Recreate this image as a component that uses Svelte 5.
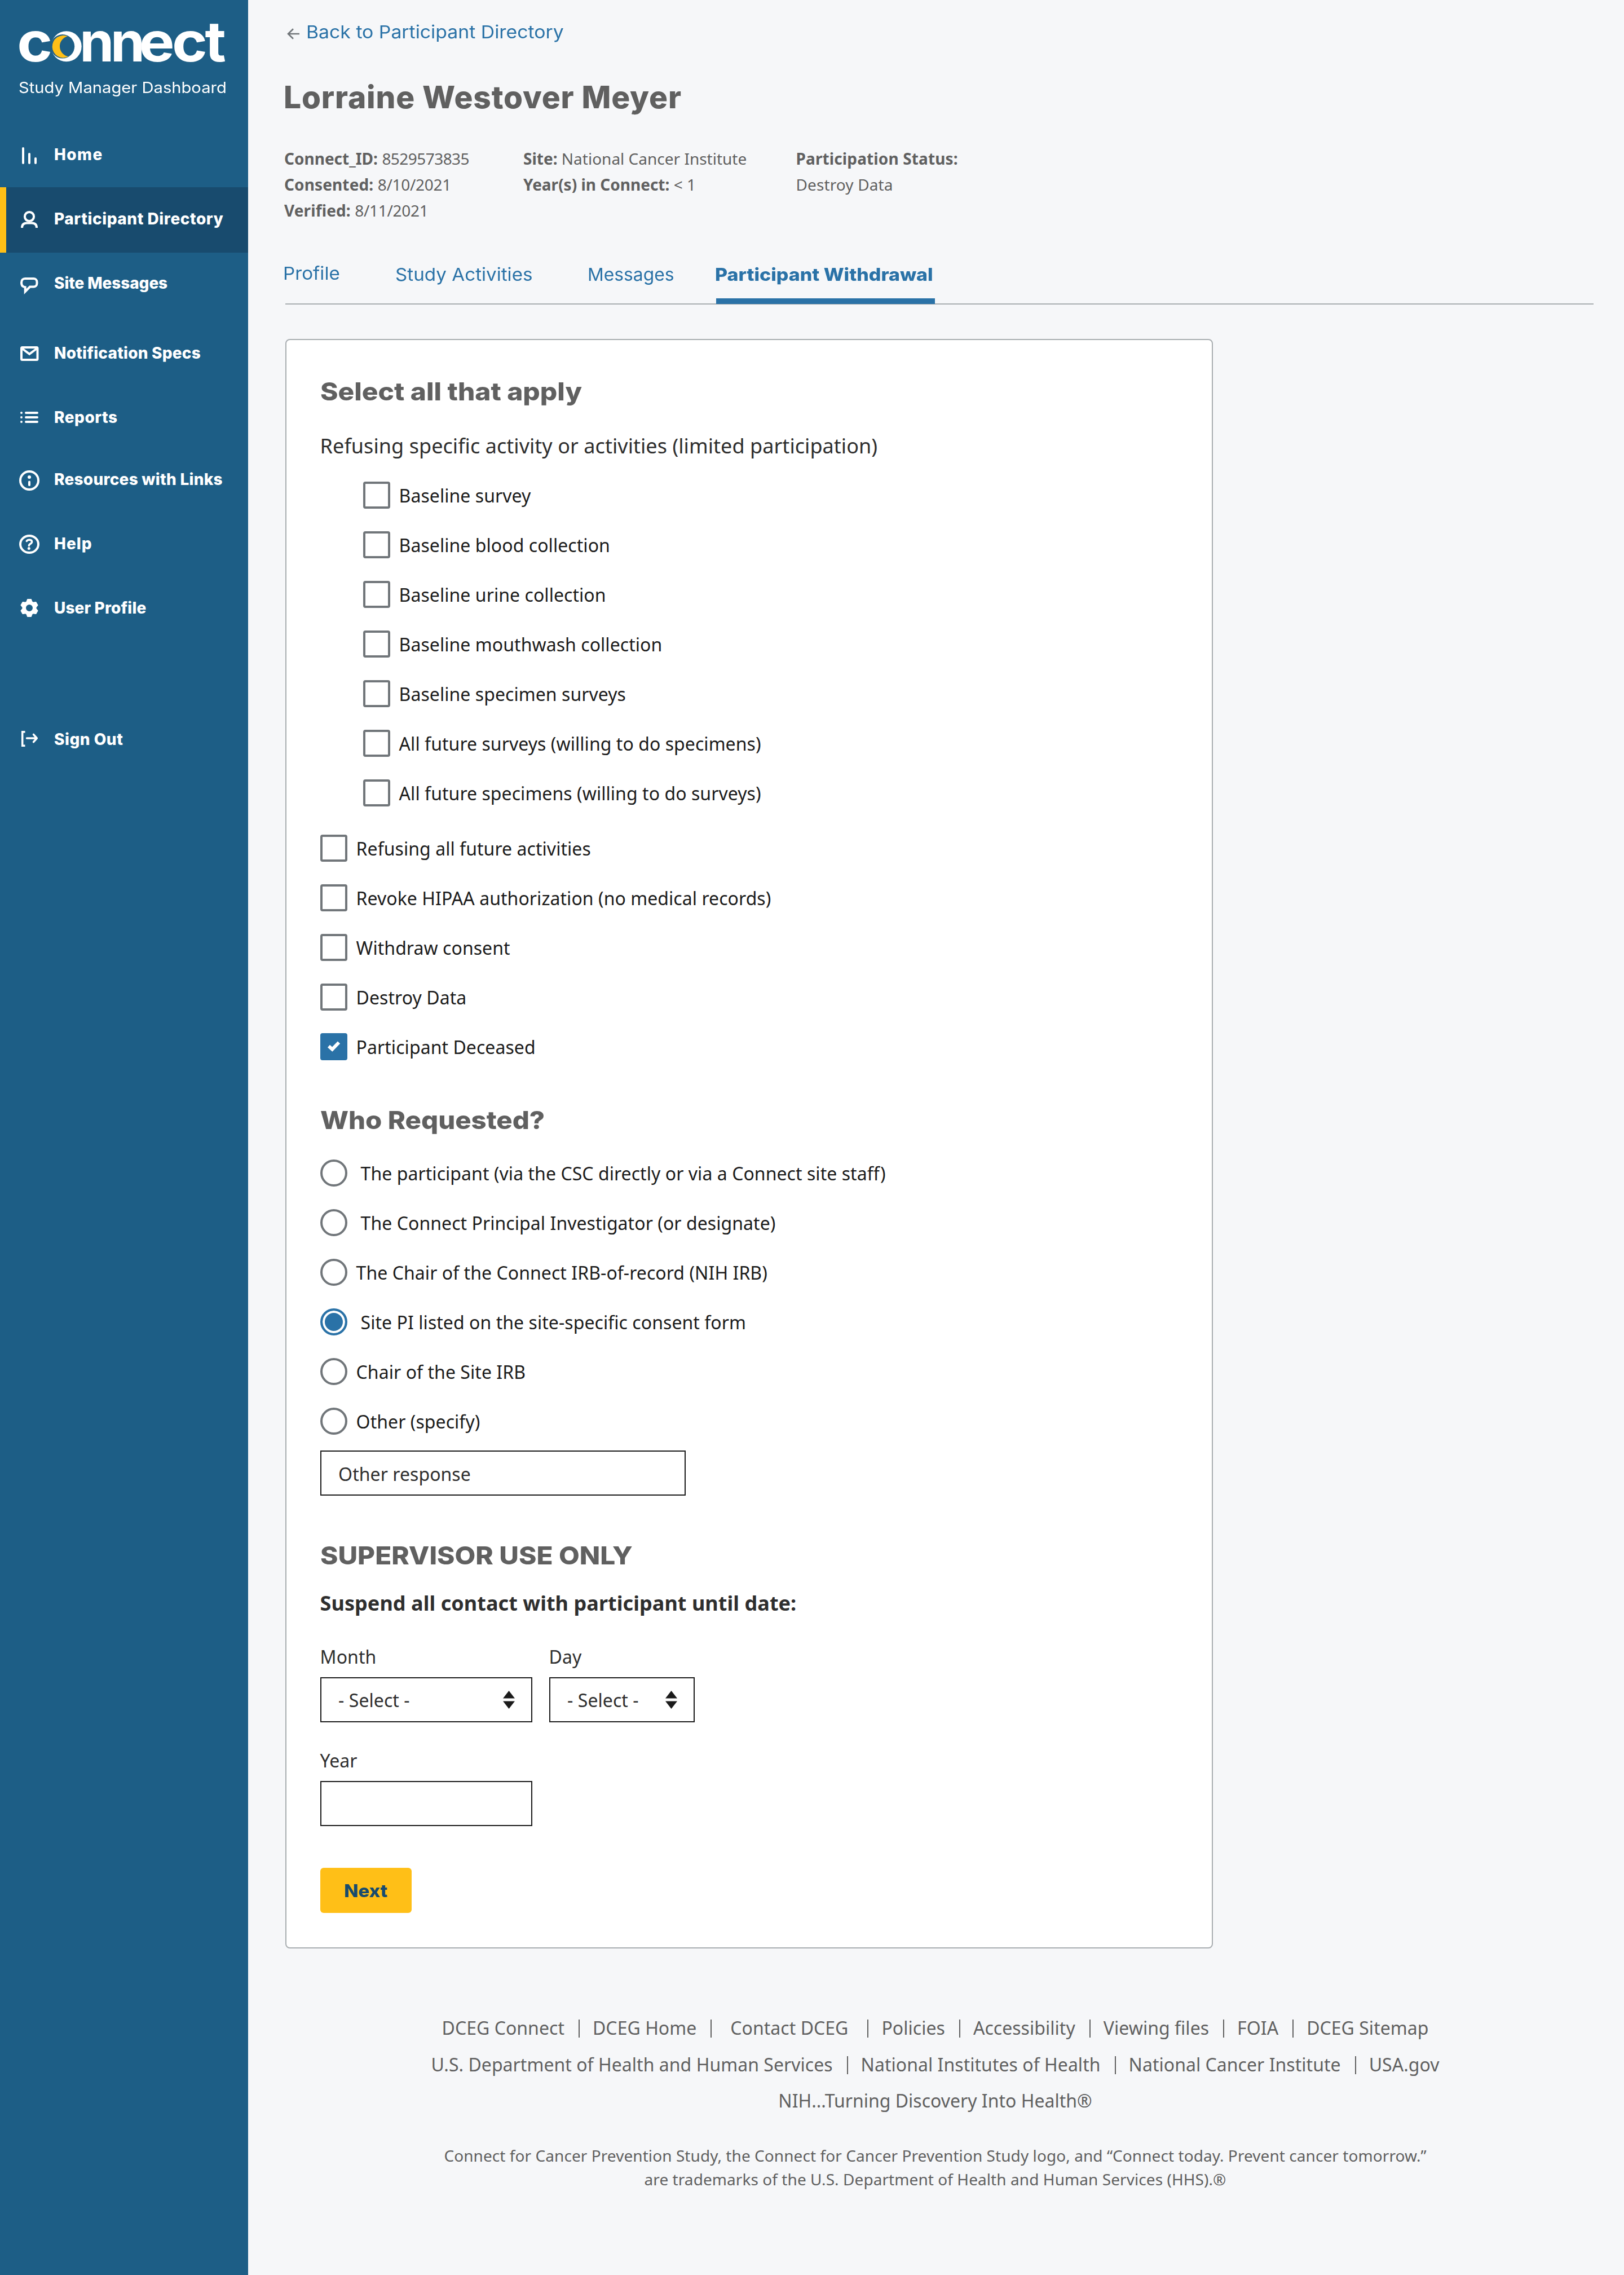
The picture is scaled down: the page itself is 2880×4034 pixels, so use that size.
<script>
  const nav = [
    { id: 'home', label: 'Home' },
    { id: 'directory', label: 'Participant Directory', active: true },
    { id: 'messages', label: 'Site Messages' },
    { id: 'notifications', label: 'Notification Specs' },
    { id: 'reports', label: 'Reports' },
    { id: 'resources', label: 'Resources with Links' },
    { id: 'help', label: 'Help' },
    { id: 'profile', label: 'User Profile' },
    { id: 'signout', label: 'Sign Out' }
  ];

  const activities = [
    'Baseline survey',
    'Baseline blood collection',
    'Baseline urine collection',
    'Baseline mouthwash collection',
    'Baseline specimen surveys',
    'All future surveys (willing to do specimens)',
    'All future specimens (willing to do surveys)'
  ];

  const refusals = [
    { label: 'Refusing all future activities' },
    { label: 'Revoke HIPAA authorization (no medical records)' },
    { label: 'Withdraw consent' },
    { label: 'Destroy Data' },
    { label: 'Participant Deceased', checked: true }
  ];

  const requesters = [
    { label: 'The participant (via the CSC directly or via a Connect site staff)', indent: true },
    { label: 'The Connect Principal Investigator (or designate)', indent: true },
    { label: 'The Chair of the Connect IRB-of-record (NIH IRB)' },
    { label: 'Site PI listed on the site-specific consent form', indent: true, checked: true },
    { label: 'Chair of the Site IRB' },
    { label: 'Other (specify)' }
  ];

  const footerLinks = ['DCEG Connect', 'DCEG Home', 'Contact DCEG', 'Policies', 'Accessibility', 'Viewing files', 'FOIA', 'DCEG Sitemap'];
  const agencyLinks = ['U.S. Department of Health and Human Services', 'National Institutes of Health', 'National Cancer Institute', 'USA.gov'];
</script>

{#snippet icon(id)}
  <svg class="nav-icon" viewBox="-18 -20 36 40" aria-hidden="true">
    {#if id === 'home'}
      <path class="line round" d="M-11 -11V15M0 -1V15M11 7V15" />
    {:else if id === 'directory'}
      <circle class="line" cx="0" cy="-4" r="8.1" />
      <path class="line" d="M-13 16C-13 9.500 -9 7.500 -4.500 7.500H4.500C9 7.500 13 9.500 13 16" />
    {:else if id === 'messages'}
      <path class="line" d="M-7.500 -8H7.500A6 6 0 0 1 13.500 -2V0.500A6 6 0 0 1 7.500 6.500H1L-7.300 15V7.200C-11.500 6.800 -14 4 -14 -0.800C-14 -5.200 -11.500 -8 -7.500 -8Z" />
    {:else if id === 'notifications'}
      <rect class="line" x="-14" y="-10" width="28.500" height="22" rx="1.500" />
      <path class="line" d="M-13.500 -8.500L0.200 1.800L14 -8.500" />
    {:else if id === 'reports'}
      <path class="line round" d="M-14 -8h.01M-14 0h.01M-14 8h.01M-6 -8H14M-6 0H14M-6 8H14" />
    {:else if id === 'resources'}
      <circle class="line" cx="0" cy="2" r="16" />
      <circle class="solid" cx="0" cy="-4" r="3" />
      <path class="line round" d="M0 4.500V10" />
    {:else if id === 'help'}
      <ellipse class="line" cx="0" cy="1" rx="16" ry="15" />
      <path class="line thin round" d="M-4.700 -4.600C-3 -7.600 4.600 -8 4.600 -3.200C4.600 0.400 -0.600 0 -0.600 3.600" />
      <circle class="solid" cx="-0.700" cy="8.400" r="2.500" />
    {:else if id === 'profile'}
      <circle class="ring" cx="0" cy="0" r="9.200" />
      <g class="teeth">
        {#each [0, 60, 120, 180, 240, 300] as angle}
          <path d="M-3.200 -15.300H3.200L5.200 -10H-5.200Z" transform={`rotate(${angle})`} />
        {/each}
      </g>
    {:else}
      <path class="line thin" d="M-7.500 -13.200H-12.300V11.200H-7.500" />
      <path class="line thin round" d="M-4.500 -2H13M7.500 -8.700L13.300 -2L7.500 4.700" />
    {/if}
  </svg>
{/snippet}

{#snippet links(items)}
  <div class="links">
    {#each items as item, i}
      {#if i > 0}<span class="sep"></span>{/if}
      <a href="#top" class:wide={item === 'Contact DCEG'}>{item}</a>
    {/each}
  </div>
{/snippet}

{#snippet arrows()}
  <svg class="arrows" viewBox="0 0 21 32" aria-hidden="true"><path d="M10.500 0L21 13.500H0ZM10.500 32L21 18.500H0Z" /></svg>
{/snippet}

<div class="page" id="top">
  <aside>
    <svg class="logo" viewBox="0 0 440 132" role="img" aria-label="connect">
      <text transform="translate(30.200 109.300) scale(1.090 1)">c</text>
      <mask id="ring">
        <rect width="440" height="132" fill="#fff" />
        <circle cx="111" cy="82.300" r="21.200" fill="#000" />
      </mask>
      <circle cx="117.700" cy="82.300" r="27" mask="url(#ring)" />
      <path class="moon" d="M120 64.300A19.800 19.800 0 1 0 121.300 100.300A18.400 18.400 0 0 1 120 64.300Z" />
      <text class="pair" transform="translate(141.300 109.300)">nn</text>
      <text transform="translate(246.400 109.300) scale(1.080 1)">e</text>
      <text transform="translate(305 109.300) scale(1.090 1)">c</text>
      <text transform="translate(363.500 109.300) scale(1.040 1)">t</text>
    </svg>
    <p class="product">Study Manager Dashboard</p>
    <nav>
      {#each nav as item}
        <a href="#top" class="nav-item {item.id}" class:active={item.active}>
          {@render icon(item.id)}
          <span>{item.label}</span>
        </a>
      {/each}
    </nav>
  </aside>

  <main>
    <a class="back" href="#top">
      <svg viewBox="0 0 22 20" aria-hidden="true"><path d="M11 1.300L2 10L11 18.700M2 10H22" /></svg>
      <span>Back to Participant Directory</span>
    </a>
    <h1>Lorraine Westover Meyer</h1>

    <section class="meta">
      <div>
        <p><b class="id">Connect_ID:</b> <span class="num">8529573835</span></p>
        <p><b>Consented:</b> <span class="date">8/10/2021</span></p>
        <p><b>Verified:</b> <span class="date">8/11/2021</span></p>
      </div>
      <div class="site">
        <p><b>Site:</b> National Cancer Institute</p>
        <p><b>Year(s) in Connect:</b> &lt; 1</p>
      </div>
      <div>
        <p><b>Participation Status:</b></p>
        <p>Destroy Data</p>
      </div>
    </section>

    <div class="tabs">
      <div class="tab-grid">
        <a href="#top" class="profile-tab"><span>Profile</span></a>
        <a href="#top"><span>Study Activities</span></a>
        <a href="#top" class="messages-tab"><span>Messages</span></a>
        <a href="#top" class="current"><span>Participant Withdrawal</span></a>
      </div>
    </div>

    <form class="card">
      <h2>Select all that apply</h2>
      <p class="lead">Refusing specific activity or activities (limited participation)</p>
      <div class="options nested">
        {#each activities as label}
          <div class="option"><span class="box"></span>{label}</div>
        {/each}
      </div>
      <div class="options">
        {#each refusals as item}
          <div class="option">
            <span class="box" class:checked={item.checked}>
              {#if item.checked}
                <svg viewBox="0 0 24 20" aria-hidden="true"><path d="M3 10L9.200 15.500L21 3.500" /></svg>
              {/if}
            </span>{item.label}
          </div>
        {/each}
      </div>

      <h2 class="who">Who Requested?</h2>
      <div class="options radios">
        {#each requesters as item}
          <div class="option">
            <span class="radio" class:selected={item.checked}></span>
            <span class:indent={item.indent}>{item.label}</span>
          </div>
        {/each}
      </div>
      <div class="field other">Other response</div>

      <h2 class="supervisor">SUPERVISOR USE ONLY</h2>
      <p class="suspend">Suspend all contact with participant until date:</p>
      <div class="date-row">
        <div class="group month">
          <span class="label">Month</span>
          <div class="field">- Select -{@render arrows()}</div>
        </div>
        <div class="group day">
          <span class="label">Day</span>
          <div class="field">- Select -{@render arrows()}</div>
        </div>
      </div>
      <div class="group year">
        <span class="label">Year</span>
        <div class="field"></div>
      </div>
      <button type="button"><span>Next</span></button>
    </form>

    <footer>
      {@render links(footerLinks)}
      {@render links(agencyLinks)}
      <p class="tagline">NIH...Turning Discovery Into Health®</p>
      <p class="legal">
        Connect for Cancer Prevention Study, the Connect for Cancer Prevention Study logo, and “Connect today. Prevent cancer tomorrow.”<br />
        are trademarks of the U.S. Department of Health and Human Services (HHS).®
      </p>
    </footer>
  </main>
</div>

<style>
  :global(body) { margin: 0; background: #f6f7f9; }
  .page {
    display: flex;
    width: 2880px;
    height: 4034px;
    overflow: hidden;
    background: #f6f7f9;
    color: #606060;
    font-family: "Noto Sans", sans-serif;
  }
  .page :is(p, h1, h2) { margin: 0; }
  a { color: inherit; text-decoration: none; white-space: nowrap; }
  p, h1, h2 { white-space: nowrap; }

  /* Sidebar */
  aside { width: 440px; flex: none; background: #1d5e86; color: #fff; font-family: Inter, sans-serif; }
  .logo { display: block; width: 440px; height: 132px; fill: #fff; }
  .logo text { font: 700 98px Inter, sans-serif; }
  .logo .pair { letter-spacing: -6.4px; }
  .logo .moon { fill: #ffbf17; }
  .page .product {
    width: 340px;
    margin-left: 33px;
    font-size: 27px;
    line-height: 48px;
    transform: scaleX(1.08);
    transform-origin: left;
  }
  nav { display: flex; flex-direction: column; margin-top: 38px; }
  .nav-item {
    display: flex;
    align-items: center;
    gap: 26px;
    height: 112px;
    padding-left: 34px;
    font-size: 28px;
    font-weight: 800;
  }
  .nav-icon { width: 36px; height: 40px; overflow: visible; flex: none; }
  .home { letter-spacing: 1.4px; }
  .directory { margin-top: 2px; padding-bottom: 4px; letter-spacing: .55px; }
  .messages { margin-top: -2px; letter-spacing: -.1px; }
  .notifications { margin-top: 12px; letter-spacing: .2px; }
  .reports { margin-top: 2px; letter-spacing: .5px; }
  .resources { margin-top: -2px; letter-spacing: .25px; }
  .help { margin-top: 2px; letter-spacing: 1px; }
  .profile { margin-top: 2px; letter-spacing: .1px; }
  .signout { margin-top: 121px; letter-spacing: .5px; }
  .active { background: #184b6e; box-shadow: inset 11px 0 #ffbf17; }
  .line { fill: none; stroke: #fff; stroke-width: 4; }
  .thin { stroke-width: 3.5; }
  .round { stroke-linecap: round; stroke-linejoin: round; }
  .solid { fill: #fff; }
  .ring { fill: none; stroke: #fff; stroke-width: 6.4; }
  .teeth { fill: #fff; stroke: #fff; stroke-width: 1.4; stroke-linejoin: round; }

  /* Participant header */
  main { width: 2440px; box-sizing: border-box; padding: 36px 0 0 64px; }
  .back {
    display: flex;
    align-items: center;
    gap: 12px;
    height: 41px;
    padding-left: 5px;
    color: #2a72a7;
    font: 400 31.5px/41px Inter, sans-serif;
  }
  .back svg { width: 22px; height: 20px; margin-top: 6px; fill: none; stroke: #71767a; stroke-width: 2.6; }
  .back span { transform: scaleX(1.072); transform-origin: left; }
  .page h1 { margin: 60px 0 0 -1px; font: 800 55px/70px Inter, sans-serif; letter-spacing: .85px; }
  .meta {
    display: grid;
    grid-template-columns: 424px 483.5px auto;
    margin-top: 51px;
    height: 138px;
    font-size: 28px;
    line-height: 46px;
    letter-spacing: .12px;
  }
  .id, .site { letter-spacing: 0; }
  .num { letter-spacing: -.55px; }
  .date { letter-spacing: -.3px; }

  .tabs { width: 2320px; height: 72px; margin: 70px 0 0 2px; border-bottom: 2px solid #a9aeb1; }
  .tab-grid {
    display: grid;
    grid-template-columns: 199px 340.5px 228.5px 388px;
    height: 73px;
    margin-left: -4px;
    color: #2a72a7;
    font: 400 31.5px/42px Inter, sans-serif;
  }
  .tab-grid span { display: inline-block; transform: scaleX(1.054); transform-origin: left; }
  .profile-tab { margin-top: -2px; }
  .tab-grid .messages-tab span { transform: scaleX(1.01); }
  .current { height: 63px; border-bottom: 10px solid #2a72a7; font-weight: 800; }
  .tab-grid .current span { margin-left: -2px; transform: scaleX(1.077); }

  /* Withdrawal form */
  .card {
    width: 1645px;
    box-sizing: border-box;
    margin: 61px 0 0 1.6px;
    padding: 63px 0 61px 60px;
    border: 2px solid #a9aeb1;
    border-radius: 8px;
    background: #fff;
    color: #1b1b1b;
    font-size: 32px;
    letter-spacing: .05px;
  }
  .page h2 {
    width: 560px;
    color: #606060;
    font: 800 44px/56px Inter, sans-serif;
    letter-spacing: 0;
    transform: scaleX(1.087);
    transform-origin: left;
  }
  .page h2.who { margin-top: 78px; transform: scaleX(1.075); }
  .page h2.supervisor { margin-top: 78px; transform: scaleX(1.083); }
  .page .lead { margin-top: 45px; color: #2e2e2e; font-size: 36px; line-height: 48px; }
  .page .suspend { margin-top: 33px; color: #2e2e2e; font-size: 36px; font-weight: 700; line-height: 48px; }
  .options { display: flex; flex-direction: column; gap: 40px; margin-top: 50px; }
  .nested { margin: 39px 0 0 76px; }
  .radios { margin-top: 42px; }
  .option { display: flex; align-items: center; gap: 16px; height: 48px; white-space: nowrap; }
  .box, .radio { width: 48px; height: 48px; box-sizing: border-box; border: 4px solid #71767a; border-radius: 4px; flex: none; }
  .radio { border-radius: 50%; }
  .indent { margin-left: 8px; }
  .checked { display: grid; place-items: center; background: #2a72a7; border-color: #2a72a7; }
  .checked svg { width: 24px; height: 20px; margin-top: -2px; fill: none; stroke: #fff; stroke-width: 6; }
  .selected { border-color: #2a72a7; background: #2a72a7; box-shadow: inset 0 0 0 4px #fff; }
  .field {
    display: flex;
    align-items: center;
    justify-content: space-between;
    box-sizing: border-box;
    height: 80px;
    padding: 0 29px 0 30.5px;
    border: 2px solid #1b1b1b;
    color: #2e2e2e;
  }
  .other { width: 648px; margin-top: 28px; padding-top: 3px; }
  .arrows { width: 21px; height: 32px; fill: #1b1b1b; }
  .date-row { display: flex; gap: 30px; margin-top: 49px; }
  .group { display: flex; flex-direction: column; gap: 14px; }
  .label { color: #2e2e2e; line-height: 44px; }
  .month, .year { width: 376px; }
  .day { width: 258px; }
  .year { margin-top: 46px; }
  button {
    display: block;
    width: 162px;
    height: 80px;
    margin: 74px 0 0;
    padding: 0;
    border: 0;
    border-radius: 6px;
    background: #ffbf17;
    color: #184b6e;
    font: 800 31.5px/82px Inter, sans-serif;
  }
  button span { display: inline-block; transform: scaleX(1.05); }

  /* Footer */
  footer { margin: 119px 0 0 -67px; font-size: 32px; line-height: 44px; text-align: center; }
  .links { display: flex; justify-content: center; align-items: center; height: 44px; margin-bottom: 21px; letter-spacing: .03px; }
  .sep { width: 2px; height: 32px; margin: 2px 23px 0 25px; background: #606060; }
  .wide { margin: 0 9px 0 10px; }
  .page .tagline { margin-top: -1px; }
  .page .legal { margin-top: 54px; font-size: 28px; line-height: 42px; letter-spacing: .07px; }
</style>
